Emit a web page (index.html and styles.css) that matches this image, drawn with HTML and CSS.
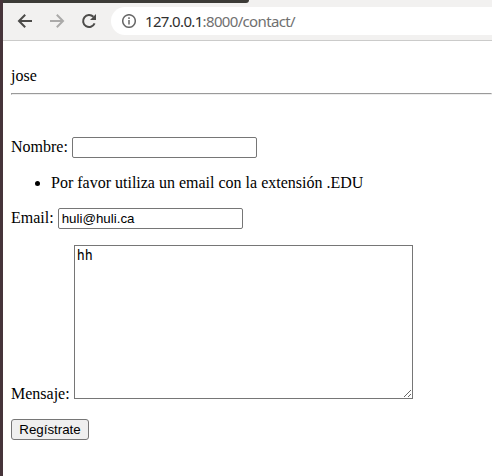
FILE: index.html
```html
<!DOCTYPE html>
<html lang="es">
<head>
<meta charset="utf-8">
<title>Contacto</title>
<link rel="stylesheet" href="styles.css">
</head>
<body>
<div class="window">
  <div class="tabs"><div class="tabs-dark"></div></div>
  <header class="toolbar">
    <svg class="nav" viewBox="0 0 16 16"><path d="M15 8H2M8.2 1.8 2 8l6.2 6.2"/></svg>
    <svg class="nav forward" viewBox="0 0 16 16"><path d="M1 8h13M7.8 1.8 14 8l-6.2 6.2"/></svg>
    <svg class="nav" viewBox="0 0 16 16"><path d="M13.6 10.4A6 6 0 1 1 12.4 3.8"/><path class="solid" d="M15 1v6H9z"/></svg>
    <div class="address">
      <svg class="info" viewBox="0 0 14 14"><circle cx="7" cy="7" r="6.3"/><path d="M7 6v4.5M7 3.3v1.6"/></svg>
      <span class="url">127.0.0.1<span class="path">:8000/contact/</span></span>
    </div>
  </header>
  <main class="page">
    <div class="user">jose</div>
    <hr>
    <form>
      <div class="row"><label for="nombre">Nombre:</label><input id="nombre" type="text"></div>
      <ul><li>Por favor utiliza un email con la extensión .EDU</li></ul>
      <div class="row"><label for="email">Email:</label><input id="email" type="text" value="huli@huli.ca"></div>
      <div class="row message"><label for="mensaje">Mensaje:</label><textarea id="mensaje">hh</textarea></div>
      <button type="button">Regístrate</button>
    </form>
  </main>
</div>
</body>
</html>
```
FILE: styles.css
```css
* { box-sizing: border-box; }
body { margin: 0; background: #fff; overflow: hidden; }
.window {
  height: 476px;
  border-left: 3px solid #46343a;
  font: 16px/18px "Liberation Serif", serif;
  color: #000;
}
.tabs { height: 3px; background: #f2f1f0; }
.tabs-dark { width: 246px; height: 3px; background: #3c3b37; border-bottom-right-radius: 4px; }
.toolbar {
  display: flex;
  align-items: center;
  height: 38px;
  padding: 0 0 1px 14px;
  background: #f2f1f0;
  border-bottom: 1px solid #cbcbca;
}
.nav { width: 16px; height: 16px; margin-right: 16px; fill: none; stroke: #4c4b49; stroke-width: 2; }
.nav.forward { stroke: #abaaa9; }
.nav .solid { fill: #4c4b49; stroke: none; }
.address {
  display: flex;
  align-items: center;
  flex: 1;
  height: 28px;
  margin-left: -2px;
  padding-left: 11px;
  background: #fff;
  border-radius: 14px 0 0 14px;
}
.info { width: 14px; height: 14px; margin-right: 9px; fill: none; stroke: #686868; stroke-width: 1.5; }
.url { margin-top: -1px; font: 15px/20px "Noto Sans", sans-serif; letter-spacing: -0.66px; color: #303030; }
.path { color: #707070; }
.page { padding: 26px 0 0 8px; }
hr { margin: 8px 0 42px; border: 1px solid; border-color: #9a9a9a #eee #eee #9a9a9a; }
.row { display: flex; align-items: baseline; gap: 4px; }
input {
  width: 185px;
  height: 21px;
  padding: 1px 3px;
  border: 1px solid #767676;
  border-radius: 2px;
  font: 13.333px "Liberation Sans", sans-serif;
  color: #000;
}
ul { margin: 16px 0; padding-left: 40px; }
.message { margin-top: 16px; align-items: flex-end; }
.message label { margin-bottom: -4px; }
textarea {
  width: 339px;
  height: 154px;
  padding: 2px;
  border: 1px solid #767676;
  font: 13.333px/16px "DejaVu Sans Mono", monospace;
  color: #000;
  resize: both;
}
button {
  display: block;
  width: 78px;
  height: 21px;
  margin-top: 20px;
  padding: 0;
  border: 1px solid #767676;
  border-radius: 3px;
  background: #efefef;
  font: 13.333px "Liberation Sans", sans-serif;
  color: #000;
}
```
